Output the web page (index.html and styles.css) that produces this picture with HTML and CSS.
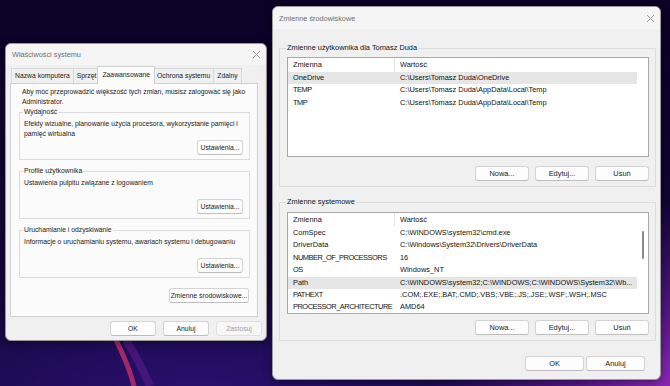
FILE: index.html
```html
<!DOCTYPE html>
<html lang="pl">
<head>
  <meta charset="UTF-8">
  <title>Właściwości systemu</title>
  <link rel="stylesheet" href="styles.css">
</head>
<body>

  <div class="desktop">
    <svg class="streak" width="670" height="386" viewBox="0 0 670 386">
      <path d="M116 340 C 124 356, 130 370, 134 386" stroke="#c2306a" stroke-width="5" fill="none" opacity="0.8"/>
      <path d="M126 340 C 136 356, 144 372, 150 386" stroke="#5a1a8a" stroke-width="8" fill="none" opacity="0.6"/>
    </svg>

    <!-- Właściwości systemu -->
    <div class="window sysprops">
      <div class="titlebar">
        <span>Właściwości systemu</span>
        <svg class="close" width="9" height="9" viewBox="0 0 9 9"><path d="M1 1 L8 8 M8 1 L1 8" stroke="#9a9a9a" stroke-width="1"/></svg>
      </div>
      <div class="tabs">
        <div class="tab">Nazwa komputera</div>
        <div class="tab">Sprzęt</div>
        <div class="tab active">Zaawansowane</div>
        <div class="tab">Ochrona systemu</div>
        <div class="tab">Zdalny</div>
      </div>
      <div class="panel">
        <p class="note">Aby móc przeprowadzić większość tych zmian, musisz zalogować się jako<br>Administrator.</p>

        <fieldset class="group">
          <legend>Wydajność</legend>
          <div class="group-body">
            <p>Efekty wizualne, planowanie użycia procesora, wykorzystanie pamięci i<br>pamięć wirtualna</p>
            <div class="actions"><button class="btn">Ustawienia...</button></div>
          </div>
        </fieldset>

        <fieldset class="group">
          <legend>Profile użytkownika</legend>
          <div class="group-body">
            <p>Ustawienia pulpitu związane z logowaniem</p>
            <div class="actions"><button class="btn">Ustawienia...</button></div>
          </div>
        </fieldset>

        <fieldset class="group">
          <legend>Uruchamianie i odzyskiwanie</legend>
          <div class="group-body">
            <p>Informacje o uruchamianiu systemu, awariach systemu i debugowaniu</p>
            <div class="actions"><button class="btn">Ustawienia...</button></div>
          </div>
        </fieldset>

        <div class="actions env"><button class="btn wide">Zmienne środowiskowe...</button></div>
      </div>
      <div class="footer">
        <button class="btn">OK</button>
        <button class="btn">Anuluj</button>
        <button class="btn" disabled>Zastosuj</button>
      </div>
    </div>

    <!-- Zmienne środowiskowe -->
    <div class="window envvars">
      <div class="titlebar">
        <span>Zmienne środowiskowe</span>
        <svg class="close" width="9" height="9" viewBox="0 0 9 9"><path d="M1 1 L8 8 M8 1 L1 8" stroke="#9a9a9a" stroke-width="1"/></svg>
      </div>

      <fieldset class="group big">
        <legend>Zmienne użytkownika dla Tomasz Duda</legend>
        <div class="list user">
          <div class="row head"><span class="c1">Zmienna</span><span class="c2">Wartość</span></div>
          <div class="row selected"><span class="c1">OneDrive</span><span class="c2">C:\Users\Tomasz Duda\OneDrive</span></div>
          <div class="row"><span class="c1 caps">TEMP</span><span class="c2">C:\Users\Tomasz Duda\AppData\Local\Temp</span></div>
          <div class="row"><span class="c1 caps">TMP</span><span class="c2">C:\Users\Tomasz Duda\AppData\Local\Temp</span></div>
        </div>
        <div class="actions trio">
          <button class="btn">Nowa...</button>
          <button class="btn">Edytuj...</button>
          <button class="btn">Usuń</button>
        </div>
      </fieldset>

      <fieldset class="group big">
        <legend>Zmienne systemowe</legend>
        <div class="list system">
          <div class="row head"><span class="c1">Zmienna</span><span class="c2">Wartość</span></div>
          <div class="row"><span class="c1">ComSpec</span><span class="c2">C:\WINDOWS\system32\cmd.exe</span></div>
          <div class="row"><span class="c1">DriverData</span><span class="c2">C:\Windows\System32\Drivers\DriverData</span></div>
          <div class="row"><span class="c1 caps">NUMBER_OF_PROCESSORS</span><span class="c2">16</span></div>
          <div class="row"><span class="c1 caps">OS</span><span class="c2">Windows_NT</span></div>
          <div class="row selected"><span class="c1">Path</span><span class="c2">C:\WINDOWS\system32;C:\WINDOWS;C:\WINDOWS\System32\Wb...</span></div>
          <div class="row"><span class="c1 caps">PATHEXT</span><span class="c2">.COM;.EXE;.BAT;.CMD;.VBS;.VBE;.JS;.JSE;.WSF;.WSH;.MSC</span></div>
          <div class="row"><span class="c1 caps">PROCESSOR_ARCHITECTURE</span><span class="c2">AMD64</span></div>
          <div class="scrollthumb"></div>
        </div>
        <div class="actions trio">
          <button class="btn">Nowa...</button>
          <button class="btn">Edytuj...</button>
          <button class="btn">Usuń</button>
        </div>
      </fieldset>

      <div class="footer">
        <button class="btn mid">OK</button>
        <button class="btn mid">Anuluj</button>
      </div>
    </div>
  </div>

</body>
</html>
```

FILE: styles.css
```css
body {
  margin: 0;
  font-family: "Liberation Sans", Arial, sans-serif;
  font-size: 6.8px;
  color: #1a1a1a;
}

.desktop {
  position: relative;
  width: 670px;
  height: 386px;
  overflow: hidden;
  background:
    radial-gradient(ellipse 260px 200px at 690px 400px, #9a2cc4 0%, rgba(120, 30, 170, 0.6) 45%, rgba(20, 5, 60, 0) 100%),
    radial-gradient(ellipse 300px 120px at 200px 400px, #2a1070 0%, rgba(20, 8, 60, 0) 100%),
    linear-gradient(180deg, #0b0226 0%, #110434 60%, #180a4a 100%);
}

.streak {
  position: absolute;
  left: 0;
  top: 0;
}

p {
  margin: 0;
  white-space: nowrap;
}

.window {
  position: absolute;
  background: #f0f0f0;
  border: 1px solid #9a9a9a;
  border-radius: 6px;
  box-sizing: border-box;
  display: flex;
  flex-direction: column;
  overflow: hidden;
  box-shadow: 0 2px 8px rgba(0, 0, 0, 0.4);
}

.titlebar {
  display: flex;
  align-items: center;
  justify-content: space-between;
  height: 20px;
  padding: 0 5px 0 6px;
  color: #707070;
  background: #f5f5f5;
  font-size: 7.3px;
  flex-shrink: 0;
}

/* Właściwości systemu */

.sysprops {
  left: 5px;
  top: 43px;
  width: 262px;
  height: 298px;
}

.sysprops .titlebar {
  height: 21px;
}

.tabs {
  display: flex;
  align-items: flex-end;
  padding-left: 5px;
  height: 18px;
  position: relative;
  z-index: 1;
}

.tab {
  height: 14px;
  line-height: 14px;
  padding: 0 3px;
  border: 1px solid #d9d9d9;
  border-bottom: none;
  background: #f0f0f0;
  margin-right: -1px;
}

.tab.active {
  height: 17px;
  line-height: 15px;
  background: #fbfbfb;
  padding: 0 4px;
  margin: 0 0 -1px -2px;
  position: relative;
  z-index: 2;
  border-color: #d0d0d0;
}

.tab.active + .tab {
  margin-left: -2px;
}

.panel {
  margin: 0 8px 0 4px;
  height: 234px;
  background: #fbfbfb;
  border: 1px solid #d0d0d0;
  box-sizing: border-box;
  padding: 3px 7px 0 8px;
}

.note {
  margin-left: 3px;
  line-height: 9.5px;
  margin-bottom: 1px;
}

.group {
  margin: 0 0 6px 0;
  padding: 0 6px 4px 4px;
  border: 1px solid #dcdcdc;
  border-radius: 0;
  min-width: 0;
}

.group legend {
  padding: 0 1px;
  margin-left: -1px;
  line-height: 10px;
}

.group-body {
  height: 38px;
  display: flex;
  flex-direction: column;
}

.group-body p {
  line-height: 9.5px;
  margin-top: 2px;
}

.actions {
  display: flex;
  justify-content: flex-end;
  gap: 6px;
}

.group-body .actions {
  margin-top: auto;
}

.env {
  margin-right: 1px;
  margin-top: 10px;
}

.btn {
  font-family: inherit;
  font-size: 6.8px;
  color: #1a1a1a;
  height: 15px;
  width: 46px;
  padding: 0;
  white-space: nowrap;
  background: #fdfdfd;
  border: 1px solid #d3d3d3;
  border-bottom-color: #bdbdbd;
  border-radius: 3px;
}

.btn.wide {
  width: 80px;
}

.btn:disabled {
  color: #a0a0a0;
  background: #f7f7f7;
  border-color: #e0e0e0;
}

.footer {
  display: flex;
  justify-content: flex-end;
  gap: 7px;
  padding: 4px 4px 0 0;
}

/* Zmienne środowiskowe */

.envvars {
  left: 272px;
  top: 6px;
  width: 389px;
  height: 374px;
  font-size: 7.4px;
}

.envvars .btn {
  font-size: 7.4px;
}

.envvars .titlebar {
  height: 22px;
}

.group.big {
  margin: 14px 4px 0 6px;
  padding: 4px 6px 5px 7px;
}

.group.big + .group.big {
  margin-top: 10px;
  padding-top: 5px;
}

.big legend {
  color: #111;
}

.list {
  position: relative;
  background: #ffffff;
  border: 1px solid #a8a8a8;
  box-sizing: border-box;
  color: #111;
}

.list.user {
  height: 100px;
  margin-bottom: 9px;
}

.list.system {
  height: 102px;
  margin-bottom: 6px;
}

.row {
  display: flex;
  height: 12.4px;
  line-height: 12.4px;
  width: 349px;
  white-space: nowrap;
}

.row.head {
  height: 14px;
  line-height: 14px;
  width: auto;
}

.row.head .c1 {
  border-right: 1px solid #e5e5e5;
}

.row.selected {
  background: #e6e6e6;
}

.c1 {
  width: 107px;
  padding-left: 5px;
  box-sizing: border-box;
  flex-shrink: 0;
}

.c1.caps {
  letter-spacing: -0.45px;
}

.c2 {
  padding-left: 5px;
}

.scrollthumb {
  position: absolute;
  right: 4px;
  top: 18px;
  width: 2px;
  height: 28px;
  border-radius: 1px;
  background: #8a8a8a;
}

.trio .btn {
  width: 54px;
}

.trio {
  gap: 6px;
}

.envvars .footer {
  padding: 15px 15px 0 0;
  gap: 2px;
}

.btn.mid {
  width: 59px;
}
```
